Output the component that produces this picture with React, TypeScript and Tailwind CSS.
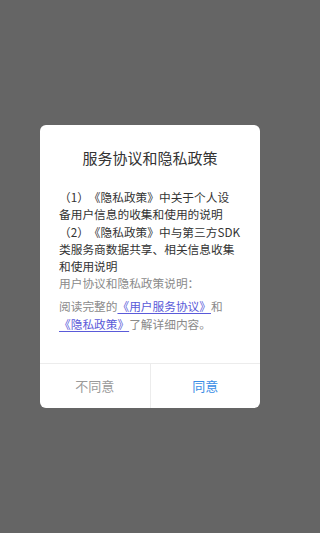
export default function App() {
  return (
    <div className="w-full min-h-[533px] bg-[#656565]">
      <div
        className="w-[300px] h-[533px] flex items-center justify-center [text-spacing-trim:space-all]"
        style={{ fontFamily: '"Noto Sans CJK SC", "Noto Sans", sans-serif' }}
      >
        <div className="w-[220px] bg-white rounded-[6px] flex flex-col overflow-hidden">
          <div className="pt-[22px] text-center text-[15px] leading-[22px] text-[#333333]">
            服务协议和隐私政策
          </div>
          <div className="pl-[19px] pr-[12px] pt-[19px] pb-[31px] text-[11.7px] leading-[17.2px] whitespace-nowrap">
            <div className="text-[#333333]">
              <div>（1）《隐私政策》中关于个人设</div>
              <div>备用户信息的收集和使用的说明</div>
              <div>（2）《隐私政策》中与第三方SDK</div>
              <div>类服务商数据共享、相关信息收集</div>
              <div>和使用说明</div>
            </div>
            <div className="text-[#8a8a8a]">用户协议和隐私政策说明：</div>
            <div className="text-[#8a8a8a] mt-[6px]">
              <div>
                阅读完整的
                <span className="text-[#5a5ad9] underline underline-offset-2">《用户服务协议》</span>
                和
              </div>
              <div>
                <span className="text-[#5a5ad9] underline underline-offset-2">《隐私政策》</span>
                了解详细内容。
              </div>
            </div>
          </div>
          <div className="flex border-t border-[#ececec] h-[45px]">
            <div className="flex-1 flex items-center justify-center text-[13px] text-[#9a9a9a] border-r border-[#ececec]">
              不同意
            </div>
            <div className="flex-1 flex items-center justify-center text-[13px] text-[#3a8ee6]">
              同意
            </div>
          </div>
        </div>
      </div>
    </div>
  );
}
